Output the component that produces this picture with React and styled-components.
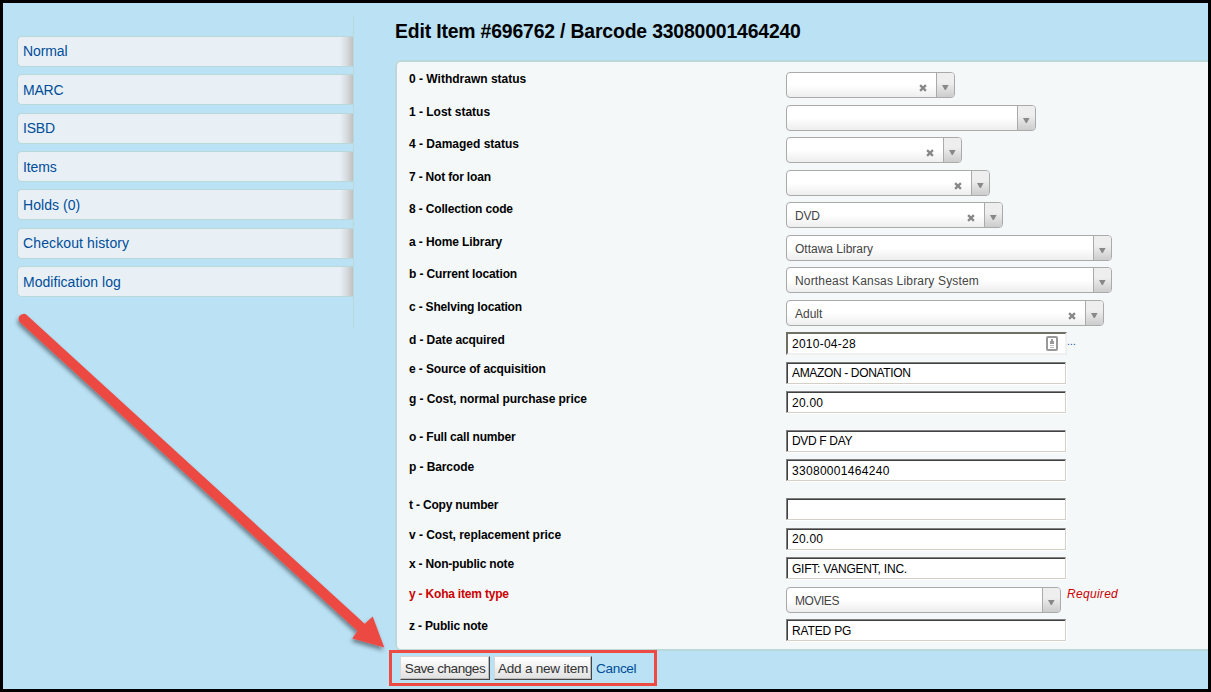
import React from "react";
import styled, { createGlobalStyle } from "styled-components";

const Global = createGlobalStyle`
  *, *::before, *::after { box-sizing: border-box; }
  body { margin: 0; background: #000; font-family: "Liberation Sans", Arial, sans-serif; color: #000; }
`;

const Page = styled.div`
  position: relative;
  display: flex;
  width: 1211px;
  height: 692px;
  overflow: hidden;
  border: 3px solid #000;
  background: #bae1f4;
`;

const Sidebar = styled.nav`
  flex: none;
  width: 351px;
  height: 313px;
  margin-top: 13px;
  padding: 20px 0 0 14px;
  border-right: 1px solid #b9d8d9;
`;

const TabList = styled.ul`
  display: flex;
  flex-direction: column;
  gap: 7.33px;
  margin: 0;
  padding: 0;
  list-style: none;
`;

const Tab = styled.li`
  height: 31px;
  border: 1px solid #b9d8d9;
  border-right: 0;
  border-radius: 5px 0 0 5px;
  background: linear-gradient(to left, #c0c0c0 0, #d6dade 6px, #e8f0f6 13px);
`;

const TabLink = styled.a`
  display: block;
  padding-left: 5px;
  padding-top: ${(p) => p.$drop || 0}px;
  font-size: 14px;
  line-height: 28px;
  letter-spacing: ${(p) => p.$spacing || 0}px;
  color: #004d99;
  text-decoration: none;
`;

const Main = styled.main`
  flex: 1;
  padding-left: 41px;
`;

const Title = styled.h1`
  margin: 0;
  padding-top: 16px;
  height: 57px;
  font-size: 19.4px;
  line-height: 24px;
  letter-spacing: -0.17px;
  white-space: nowrap;
`;

const Panel = styled.fieldset`
  height: 591px;
  margin: 0;
  padding: 10px 0 0 12px;
  border: 2px solid #b9d8d9;
  border-right: 0;
  border-radius: 6px 0 0 6px;
  background: #f4f8f9;
`;

const Row = styled.div`
  display: flex;
  align-items: flex-start;
  height: ${(p) => p.$height}px;
`;

const Label = styled.label`
  flex: none;
  width: 377px;
  font-size: 12px;
  font-weight: bold;
  line-height: 14px;
  padding-top: ${(p) => p.$drop || 0}px;
  letter-spacing: ${(p) => p.$spacing || 0}px;
  color: ${(p) => (p.$required ? "#c00" : "#000")};
`;

const Select = styled.div`
  display: flex;
  width: ${(p) => p.$width}px;
  height: 26px;
  overflow: hidden;
  border: 1px solid #aaa;
  border-radius: 4px;
  background: linear-gradient(to top, #eee 0%, #fff 50%);
`;

const SelectValue = styled.span`
  flex: 1;
  padding-left: 8px;
  font-size: 12px;
  line-height: 26px;
  letter-spacing: ${(p) => p.$spacing || 0}px;
  white-space: nowrap;
  color: #444;
`;

const ClearIcon = styled.svg`
  flex: none;
  width: 8px;
  height: 8px;
  margin: 11px 9px 0 0;
`;

const SelectArrow = styled.span`
  flex: none;
  width: 18px;
  padding: 12px 0 0 5px;
  border-left: 1px solid #aaa;
  background: linear-gradient(to top, #ccc 0%, #eee 60%);
`;

const ArrowIcon = styled.svg`
  display: block;
  width: 7px;
  height: 5px;
`;

const Field = styled.div`
  width: 280px;
  height: 22px;
  padding-left: 5px;
  padding-top: ${(p) => p.$drop || 0}px;
  border: 1px solid;
  border-color: #808080 #d4d0c8 #d4d0c8 #808080;
  box-shadow: inset 1px 1px 0 #404040, 0 1px 0 #fff, 1px 0 0 #fff;
  background: #fff;
  font-size: 12px;
  line-height: 20px;
  letter-spacing: ${(p) => p.$spacing || 0}px;
  white-space: nowrap;
`;

const DateField = styled(Field)`
  display: flex;
  justify-content: space-between;
  width: 281px;
  height: 23px;
  padding-left: 4px;
  border: 2px solid;
  border-color: #706f64 #f0f0f0 #f0f0f0 #706f64;
  box-shadow: none;
`;

const AutofillIcon = styled.svg`
  width: 12px;
  height: 16px;
  margin: 2px 7px 0 0;
`;

const Ellipsis = styled.a`
  padding: 2px 0 0 0;
  font-size: 10px;
  line-height: 15px;
  letter-spacing: 0.2px;
  color: #004d99;
`;

const Required = styled.span`
  padding-left: 6px;
  font-size: 12px;
  line-height: 14px;
  font-style: italic;
  letter-spacing: 0.3px;
  color: #c00;
`;

const Actions = styled.div`
  display: flex;
  padding: 5px 0 0 5px;
`;

const Button = styled.button`
  width: ${(p) => p.$width}px;
  height: 24px;
  margin-right: 4px;
  padding: 1px 0 0;
  border: 1px solid;
  border-color: #d8d8d8 #444 #444 #d8d8d8;
  border-radius: 0;
  box-shadow: inset -1px -1px 0 #bbb;
  background: linear-gradient(to bottom, #fff 0%, #f5f5f5 35%, #e0e0e0 100%);
  font-family: inherit;
  font-size: 13.6px;
  line-height: 22px;
  letter-spacing: ${(p) => p.$spacing || 0}px;
  white-space: nowrap;
  color: #333;
`;

const CancelLink = styled.a`
  font-size: 13.6px;
  line-height: 25px;
  letter-spacing: -0.35px;
  color: #004d99;
`;

const Annotation = styled.svg`
  position: absolute;
  left: -3px;
  top: -3px;
  pointer-events: none;
`;

const tabs = [
  { text: "Normal", spacing: -0.1 },
  { text: "MARC", drop: 1, spacing: -0.2 },
  { text: "ISBD", spacing: -0.2 },
  { text: "Items", drop: 1, spacing: -0.1 },
  { text: "Holds (0)", drop: 1, spacing: 0.05 },
  { text: "Checkout history", spacing: 0.12 },
  { text: "Modification log", drop: 1, spacing: 0.04 },
];

const rows = [
  { label: "0 - Withdrawn status", select: 169, clear: true, height: 33 },
  { label: "1 - Lost status", tracking: -0.02, select: 250, height: 32 },
  { label: "4 - Damaged status", select: 176, clear: true, height: 33 },
  { label: "7 - Not for loan", tracking: -0.18, select: 204, clear: true, height: 32 },
  { label: "8 - Collection code", tracking: -0.15, select: 217, clear: true, value: "DVD", spacing: -0.2, height: 33 },
  { label: "a - Home Library", tracking: -0.1, select: 326, value: "Ottawa Library", height: 32 },
  { label: "b - Current location", tracking: -0.13, select: 326, value: "Northeast Kansas Library System", spacing: 0.17, height: 33 },
  { label: "c - Shelving location", tracking: -0.18, select: 318, clear: true, value: "Adult", height: 32 },
  { label: "d - Date acquired", tracking: -0.1, date: true, value: "2010-04-28", spacing: 0.25, height: 30, drop: 1 },
  { label: "e - Source of acquisition", tracking: -0.11, value: "AMAZON - DONATION", spacing: -0.35, height: 29 },
  { label: "g - Cost, normal purchase price", tracking: -0.07, value: "20.00", spacing: 0.25, valueDrop: 1, height: 39, drop: 1 },
  { label: "o - Full call number", tracking: -0.18, value: "DVD F DAY", spacing: -0.33, height: 29 },
  { label: "p - Barcode", tracking: -0.09, value: "33080001464240", spacing: 0.3, valueDrop: 1, height: 39, drop: 1 },
  { label: "t - Copy number", tracking: -0.18, value: "", height: 30 },
  { label: "v - Cost, replacement price", tracking: -0.05, value: "20.00", spacing: 0.25, height: 29 },
  { label: "x - Non-public note", tracking: -0.2, value: "GIFT: VANGENT, INC.", spacing: -0.22, valueDrop: 1, height: 30 },
  { label: "y - Koha item type", tracking: -0.2, select: 275, value: "MOVIES", spacing: -0.45, height: 32, required: true },
  { label: "z - Public note", tracking: -0.18, value: "RATED PG", spacing: -0.15, valueDrop: 1, height: 24 },
];

function Control({ row }) {
  if (row.select) {
    return (
      <Select $width={row.select}>
        <SelectValue $spacing={row.spacing}>{row.value}</SelectValue>
        {row.clear && (
          <ClearIcon viewBox="0 0 8 8">
            <path d="M1.1 1.1L6.9 6.9M6.9 1.1L1.1 6.9" stroke="#888" strokeWidth="2.3" />
          </ClearIcon>
        )}
        <SelectArrow>
          <ArrowIcon viewBox="0 0 7 5">
            <path d="M0 0H6.6L3.8 5H2.8Z" fill="#888" />
          </ArrowIcon>
        </SelectArrow>
      </Select>
    );
  }
  if (row.date) {
    return (
      <>
        <DateField $spacing={row.spacing}>
          {row.value}
          <AutofillIcon viewBox="0 0 12 16">
            <rect x="1" y="1" width="10" height="13" rx="1" fill="#fff" stroke="#999" strokeWidth="2" />
            <path d="M5 3H7V5H8V8H4V5H5Z" fill="#999" />
            <path d="M4 9.5H8M4 11.5H8" stroke="#bbb" />
          </AutofillIcon>
        </DateField>
        <Ellipsis>...</Ellipsis>
      </>
    );
  }
  return (
    <Field $spacing={row.spacing} $drop={row.valueDrop}>
      {row.value}
    </Field>
  );
}

export default function App() {
  return (
    <>
      <Global />
      <Page>
        <Sidebar>
          <TabList>
            {tabs.map((t) => (
              <Tab key={t.text}>
                <TabLink $drop={t.drop} $spacing={t.spacing}>{t.text}</TabLink>
              </Tab>
            ))}
          </TabList>
        </Sidebar>
        <Main>
          <Title>Edit Item #696762 / Barcode 33080001464240</Title>
          <Panel>
            {rows.map((row) => (
              <Row key={row.label} $height={row.height}>
                <Label $drop={row.drop} $spacing={row.tracking} $required={row.required}>
                  {row.label}
                </Label>
                <Control row={row} />
                {row.required && <Required>Required</Required>}
              </Row>
            ))}
          </Panel>
          <Actions>
            <Button $width={90} $spacing={-0.48}>Save changes</Button>
            <Button $width={98} $spacing={-0.26}>Add a new item</Button>
            <CancelLink>Cancel</CancelLink>
          </Actions>
        </Main>
        <Annotation width="1211" height="692" viewBox="0 0 1211 692">
          <defs>
            <filter id="shadow" x="-10%" y="-10%" width="120%" height="120%">
              <feDropShadow dx="-1" dy="3" stdDeviation="2" floodColor="#000" floodOpacity="0.45" />
            </filter>
          </defs>
          <path
            d="M27 315.2L364.7 623.8L372.7 616.5L384.3 647.5L352.3 638.5L357.5 631L20.2 322.6A4.9 4.9 0 0 1 27 315.2Z"
            fill="#ec4a42"
            filter="url(#shadow)"
          />
          <rect x="390.5" y="651.5" width="265" height="33" fill="none" stroke="#ec4a42" strokeWidth="3" />
        </Annotation>
      </Page>
    </>
  );
}
